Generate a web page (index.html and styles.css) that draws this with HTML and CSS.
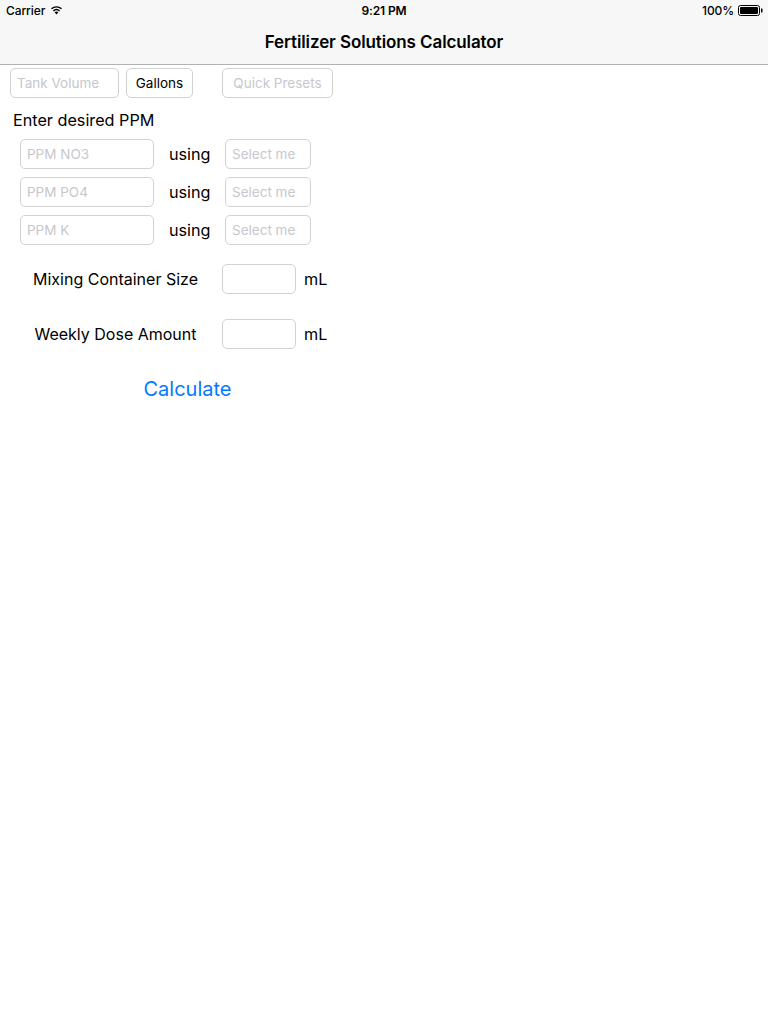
FILE: index.html
```html
<!DOCTYPE html>
<html lang="en">
<head>
<meta charset="utf-8">
<title>Fertilizer Solutions Calculator</title>
<link rel="stylesheet" href="styles.css">
</head>
<body>
<header class="chrome">
  <div class="status">
    <div class="status-left">
      <span>Carrier</span>
      <svg class="wifi" width="13" height="10" viewBox="0 0 13 10">
        <path d="M6.5 9.6 L4.6 7.3 A3 3 0 0 1 8.4 7.3 Z" fill="#000"/>
        <path d="M3.4 5.9 A4.8 4.8 0 0 1 9.6 5.9" stroke="#000" stroke-width="1.4" fill="none"/>
        <path d="M1.5 3.8 A7.5 7.5 0 0 1 11.5 3.8" stroke="#000" stroke-width="1.4" fill="none"/>
      </svg>
    </div>
    <div class="status-time">9:21 PM</div>
    <div class="status-right">
      <span>100%</span>
      <svg class="battery" width="25" height="11" viewBox="0 0 25 11">
        <rect x="0.5" y="0.5" width="21" height="10" rx="2" fill="none" stroke="#000"/>
        <rect x="2" y="2" width="18" height="7" rx="1" fill="#000"/>
        <path d="M23 3.5 h0.8 a0.7 0.7 0 0 1 0.7 0.7 v2.6 a0.7 0.7 0 0 1 -0.7 0.7 h-0.8 Z" fill="#000"/>
      </svg>
    </div>
  </div>
  <div class="navbar">Fertilizer Solutions Calculator</div>
</header>

<main class="form">
  <div class="top-row">
    <div class="field tank">Tank Volume</div>
    <div class="field unit-btn">Gallons</div>
    <div class="field presets">Quick Presets</div>
  </div>

  <div class="section-title">Enter desired PPM</div>

  <div class="ppm-list">
    <div class="ppm-row">
      <div class="field ppm">PPM NO3</div>
      <span class="using">using</span>
      <div class="field select">Select me</div>
    </div>
    <div class="ppm-row">
      <div class="field ppm">PPM PO4</div>
      <span class="using">using</span>
      <div class="field select">Select me</div>
    </div>
    <div class="ppm-row">
      <div class="field ppm">PPM K</div>
      <span class="using">using</span>
      <div class="field select">Select me</div>
    </div>
  </div>

  <div class="volume-row mixing">
    <span class="volume-label">Mixing Container Size</span>
    <div class="field volume"></div>
    <span class="unit">mL</span>
  </div>
  <div class="volume-row weekly">
    <span class="volume-label">Weekly Dose Amount</span>
    <div class="field volume"></div>
    <span class="unit">mL</span>
  </div>

  <div class="actions">
    <button class="calc">Calculate</button>
  </div>
</main>
</body>
</html>
```

FILE: styles.css
```css
* {
  box-sizing: border-box;
}

body {
  margin: 0;
  background: #fff;
  font-family: Inter, "Noto Sans", "Liberation Sans", sans-serif;
  color: #000;
}

/* ---- system status + navigation ---- */
.chrome {
  background: #f7f7f7;
  border-bottom: 1px solid #b2b2b2;
}

.status {
  height: 20px;
  display: flex;
  align-items: center;
  justify-content: space-between;
  padding: 0 5px 0 6px;
  font-size: 12px;
  font-weight: 500;
  letter-spacing: -0.1px;
  position: relative;
}

.status-left,
.status-right {
  display: flex;
  align-items: center;
  gap: 5px;
}

.status-right {
  gap: 4px;
}

.status-time {
  position: absolute;
  left: 0;
  right: 0;
  text-align: center;
  font-weight: 600;
  pointer-events: none;
}

.navbar {
  height: 44px;
  display: flex;
  align-items: center;
  justify-content: center;
  font-size: 17px;
  font-weight: 600;
  letter-spacing: -0.1px;
}

/* ---- form ---- */
.form {
  padding: 3px 0 0 10px;
}

.field {
  height: 30px;
  border: 1px solid #d2d2d2;
  border-radius: 5px;
  display: flex;
  align-items: center;
  padding: 0 6px;
  font-size: 13.5px;
  color: #c7c7cd;
  white-space: nowrap;
}

.top-row {
  display: flex;
  align-items: center;
}

.tank {
  width: 109px;
}

.unit-btn {
  width: 67px;
  margin-left: 7px;
  justify-content: center;
  color: #000;
  padding: 0;
}

.presets {
  width: 111px;
  margin-left: 29px;
  justify-content: center;
  padding: 0;
}

.section-title {
  font-size: 16.2px;
  margin: 12px 0 0 3px;
  line-height: 20px;
}

.ppm-list {
  display: flex;
  flex-direction: column;
  gap: 8px;
  margin: 9px 0 0 10px;
}

.ppm-row {
  display: flex;
  align-items: center;
}

.ppm {
  width: 134px;
}

.using {
  font-size: 16.2px;
  width: 71px;
  padding-left: 15px;
}

.select {
  width: 86px;
}

.volume-row {
  display: flex;
  align-items: center;
}

.mixing {
  margin-top: 19px;
}

.weekly {
  margin-top: 25px;
}

.volume-label {
  width: 212px;
  text-align: center;
  font-size: 16px;
  padding-right: 1px;
}

.volume {
  width: 74px;
}

.unit {
  font-size: 16.2px;
  margin-left: 8px;
}

.actions {
  width: 355px;
  display: flex;
  justify-content: center;
  margin-top: 28px;
}

.calc {
  border: 0;
  background: none;
  padding: 0;
  font: inherit;
  font-size: 20px;
  color: #007aff;
}
```
